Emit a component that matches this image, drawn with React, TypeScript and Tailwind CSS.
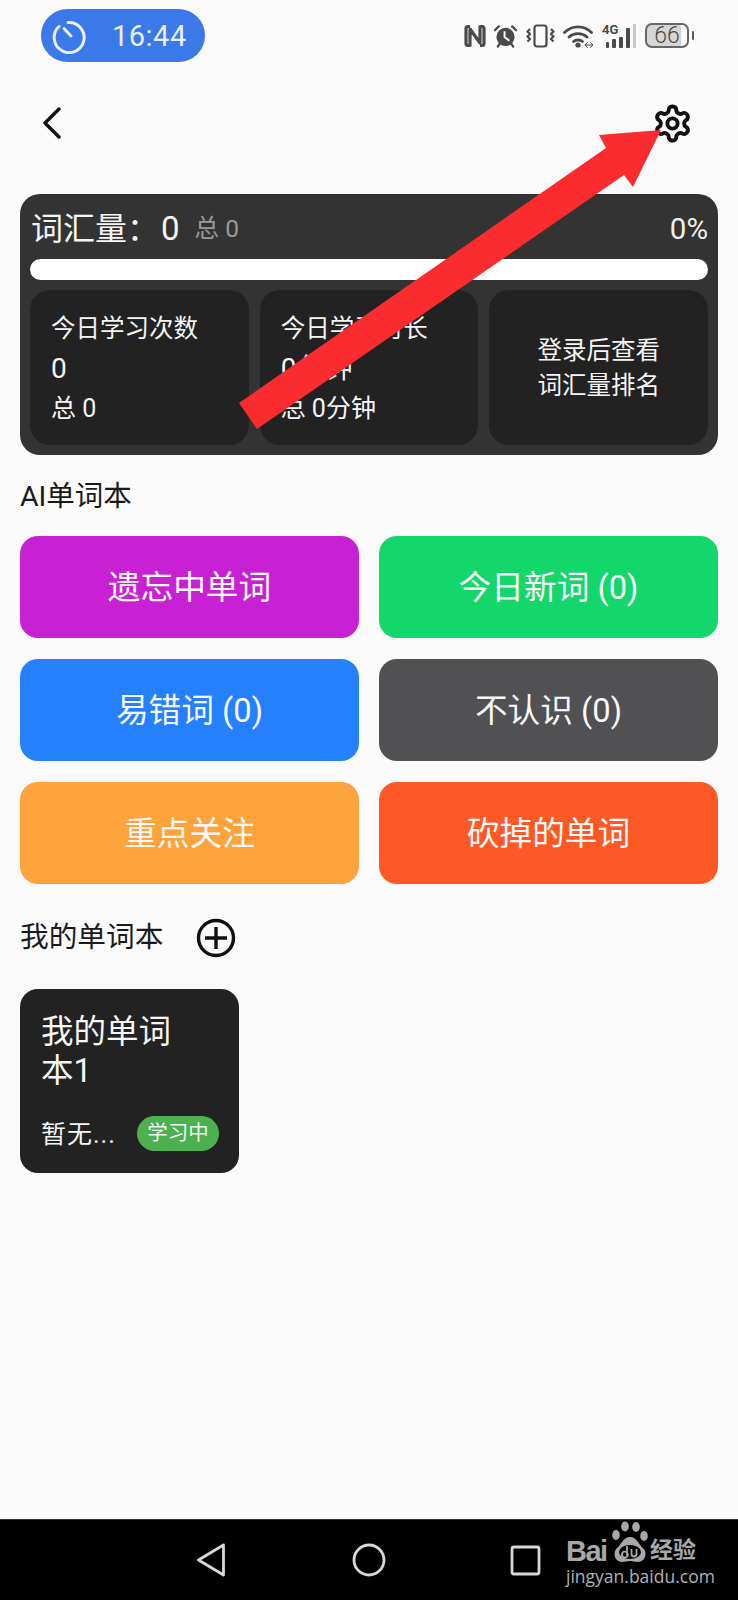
import React from "react";

const FF = { fontFamily: '"Roboto","Noto Sans CJK SC",sans-serif' };

function Timer() {
  return (
    <svg width="36" height="36" viewBox="0 0 36 36" fill="none" stroke="#e8f0fd" strokeWidth="3" strokeLinecap="round">
      <path d="M16 4.600 A15 15 0 1 1 7 8.500" />
      <path d="M12 10.500 L19 18" />
    </svg>
  );
}

function StatusIcons() {
  const c = "#4a4a4a";
  return (
    <div className="flex items-center ml-auto mr-[44px] mt-[14px]">
      {/* NFC */}
      <svg width="22" height="24" viewBox="0 0 22 24" fill="none" stroke={c} className="mr-[8px]">
        <path d="M6 2.500H4Q2 2.500 2 4.500V19.500Q2 21.500 4 21.500H6V5L16 19V2.500H18Q20 2.500 20 4.500V19.500Q20 21.500 18 21.500H16" strokeWidth="3.200" strokeLinejoin="round" />
      </svg>
      {/* alarm */}
      <svg width="23" height="24" viewBox="0 0 24 24" className="mr-[9px]">
        <circle cx="12" cy="13" r="9.500" fill={c} />
        <path d="M11 7V13L16 17" stroke="#fafafa" strokeWidth="2" fill="none" />
        <path d="M1 6L5 2M23 6L19 2M4 23L6 20M20 23L18 20" stroke={c} strokeWidth="2.400" fill="none" strokeLinecap="round" />
      </svg>
      {/* vibrate */}
      <svg width="29" height="24" viewBox="0 0 29 24" fill="none" stroke={c} strokeWidth="2.200" className="mr-[8px]">
        <rect x="8.500" y="1.500" width="12" height="21" rx="2.500" />
        <path d="M4 5L1.500 7.500L4 10L1.500 12.500L4 15L1.500 17.500M25 5L27.500 7.500L25 10L27.500 12.500L25 15L27.500 17.500" strokeLinejoin="round" />
      </svg>
      {/* wifi */}
      <svg width="30" height="24" viewBox="0 0 30 24" fill="none" stroke={c} strokeWidth="2.800" strokeLinecap="round" className="mr-[9px]">
        <path d="M1.500 8.500C9 1 21 1 28.500 8.500" />
        <path d="M6 13C11 8.500 19 8.500 24 13" />
        <path d="M10.500 17.500C13 15.500 17 15.500 19.500 17.500" />
        <circle cx="15" cy="21" r="2.600" fill={c} stroke="none" />
        <path d="M22 21H30M24.500 18.500L22 21L24.500 23.500M27.500 18.500L30 21L27.500 23.500" strokeWidth="1" />
      </svg>
      {/* signal */}
      <div className="relative w-[34px] h-[24px] mr-[9px] flex items-end gap-[3px] pl-[4px]">
        <span className="absolute left-0 top-[-1px] text-[13px] leading-[13px] font-bold text-[#4a4a4a]">4G</span>
        <div className="w-[3px] h-[6px] bg-[#4a4a4a] rounded-[1px]" />
        <div className="w-[4px] h-[9px] bg-[#4a4a4a] rounded-[1px]" />
        <div className="w-[4px] h-[11px] bg-[#4a4a4a] rounded-[1px]" />
        <div className="w-[4px] h-[20px] bg-[#4a4a4a] rounded-[1px]" />
        <div className="w-[3px] h-[24px] bg-[#c8c8c8] rounded-[1px]" />
      </div>
      {/* battery */}
      <div className="flex items-center">
        <div className="w-[44px] h-[25px] rounded-[7px] border-2 border-[#666666] bg-[linear-gradient(90deg,#d6d6d6_86%,#fafafa_86%)] flex items-center justify-center text-[23px] leading-none font-light text-[#4a4a4a]">
          66
        </div>
        <div className="w-[2px] h-[9px] ml-[3px] rounded-[1px] bg-[#5a5a5a]" />
      </div>
    </div>
  );
}

function StatCard({ title, v, total }: { title: string; v: string; total: string }) {
  return (
    <div className="bg-[#222222] rounded-[20px] pl-[21px] pt-[20px] text-[#f5f5f5] overflow-hidden">
      <div className="text-[24.500px] leading-[33px] mt-[2px] whitespace-nowrap">{title}</div>
      <div className="text-[28px] leading-[33px] mt-[7px]">{v}</div>
      <div className="text-[25px] leading-[33px] mt-[7px]">{total}</div>
    </div>
  );
}

function Btn({ label, bg }: { label: string; bg: string }) {
  return (
    <div className={`h-[102px] rounded-[18px] flex items-center justify-center pt-[3px] text-[32.700px] text-[#f8f8f8] ${bg}`}>
      {label}
    </div>
  );
}

function Paw() {
  return (
    <svg width="40" height="42" viewBox="0 0 40 42" fill="#a8a8a8">
      <ellipse cx="15" cy="5.500" rx="3.800" ry="5" />
      <ellipse cx="26" cy="6" rx="3.800" ry="5" />
      <ellipse cx="6" cy="14" rx="3.800" ry="5" />
      <ellipse cx="34" cy="15" rx="3.800" ry="5" />
      <path d="M20 16C27 16 28 23 33 27C38 32 35 41 28 41C25 41 23 40 20 40C17 40 15 41 12 41C5 41 2 32 7 27C12 23 13 16 20 16Z" />
      <ellipse cx="20" cy="31" rx="11" ry="7" fill="#000" />
      <path d="M17 25V35M17 31.500A3 3 0 1 1 16.900 31.400M21.500 28V33A2.500 2.500 0 0 0 26.500 33V28" fill="none" stroke="#a8a8a8" strokeWidth="1.800" />
    </svg>
  );
}

export default function App() {
  return (
    <div style={FF} className="relative w-[738px] h-[1600px] bg-[#fafafa] flex flex-col overflow-hidden">
      {/* status bar */}
      <div className="flex items-start h-[82px] shrink-0 pt-[9px] pl-[41px]">
        <div className="w-[164px] h-[53px] rounded-full bg-[#3b78e8] flex items-center pl-[11px] text-[#e8f0fd]">
          <Timer />
          <span className="ml-[24px] text-[29px] leading-none mt-[2px] tracking-[0.5px]">16:44</span>
        </div>
        <StatusIcons />
      </div>

      {/* header */}
      <div className="flex items-center justify-between h-[82px] shrink-0 pl-[42px] pr-[45px]">
        <svg width="20" height="32" viewBox="0 0 20 32" fill="none" stroke="#111" strokeWidth="3.400" strokeLinecap="round" strokeLinejoin="round">
          <path d="M17 2L3 16L17 30" />
        </svg>
        <svg width="41" height="41" viewBox="0 0 24 24" fill="none" stroke="#111" strokeWidth="2.300" strokeLinecap="round" strokeLinejoin="round">
          <path d="M12.220 2h-.44a2 2 0 0 0-2 2v.18a2 2 0 0 1-1 1.730l-.43.250a2 2 0 0 1-2 0l-.15-.08a2 2 0 0 0-2.730.73l-.22.380a2 2 0 0 0 .73 2.730l.150.100a2 2 0 0 1 1 1.720v.510a2 2 0 0 1-1 1.740l-.15.090a2 2 0 0 0-.73 2.730l.22.380a2 2 0 0 0 2.730.73l.15-.08a2 2 0 0 1 2 0l.43.250a2 2 0 0 1 1 1.730V20a2 2 0 0 0 2 2h.44a2 2 0 0 0 2-2v-.18a2 2 0 0 1 1-1.730l.43-.25a2 2 0 0 1 2 0l.15.080a2 2 0 0 0 2.730-.73l.22-.39a2 2 0 0 0-.73-2.730l-.15-.08a2 2 0 0 1-1-1.740v-.5a2 2 0 0 1 1-1.740l.15-.09a2 2 0 0 0 .73-2.730l-.22-.38a2 2 0 0 0-2.730-.73l-.15.080a2 2 0 0 1-2 0l-.43-.25a2 2 0 0 1-1-1.730V4a2 2 0 0 0-2-2z" />
          <circle cx="12" cy="12" r="3" />
        </svg>
      </div>

      {/* main */}
      <div className="flex-1 px-[20px] pt-[30px]">
        <div className="bg-[#333333] rounded-[20px] h-[261px] px-[10px] flex flex-col">
          <div className="h-[65px] flex items-center text-[#f5f5f5] pt-[5px]">
            <span className="text-[32px] pl-[1px]">词汇量：</span>
            <span className="text-[33px] ml-[2px]">0</span>
            <span className="text-[24.500px] ml-[15px] text-[#9a9a9a]">总 0</span>
            <span className="text-[29.500px] ml-auto text-[#f0f0f0]">0%</span>
          </div>
          <div className="h-[21px] bg-white rounded-full" />
          <div className="grid grid-cols-3 gap-[11px] mt-[10px] h-[155px]">
            <StatCard title="今日学习次数" v="0" total="总 0" />
            <StatCard title="今日学习时长" v="0分钟" total="总 0分钟" />
            <div className="bg-[#222222] rounded-[20px] flex items-center justify-center text-center text-[24.500px] leading-[35px] text-[#f5f5f5]">
              <div>
                登录后查看
                <br />
                词汇量排名
              </div>
            </div>
          </div>
        </div>

        <div className="text-[28.500px] leading-[36px] text-[#1a1a1a] mt-[24px]">AI单词本</div>

        <div className="grid grid-cols-2 gap-x-[20px] gap-y-[21px] mt-[21px]">
          <Btn label="遗忘中单词" bg="bg-[#c821d4]" />
          <Btn label="今日新词 (0)" bg="bg-[#14d76b]" />
          <Btn label="易错词 (0)" bg="bg-[#2580fd]" />
          <Btn label="不认识 (0)" bg="bg-[#515053]" />
          <Btn label="重点关注" bg="bg-[#fea33c]" />
          <Btn label="砍掉的单词" bg="bg-[#fd5825]" />
        </div>

        <div className="flex items-center mt-[32px] h-[44px]">
          <span className="text-[28.700px] text-[#1a1a1a]">我的单词本</span>
          <svg width="40" height="40" viewBox="0 0 40 40" fill="none" stroke="#111" strokeWidth="3.400" className="ml-[33px]">
            <circle cx="20" cy="20" r="17.500" />
            <path d="M20 9V31M9 20H31" />
          </svg>
        </div>

        <div className="w-[219px] h-[184px] bg-[#222222] rounded-[18px] mt-[29px] pl-[21px] pr-[20px] pt-[24px] text-[#f5f5f5] flex flex-col">
          <div className="text-[32.500px] leading-[39px] w-[136px] break-all">我的单词本1</div>
          <div className="flex items-center justify-between mt-[23px]">
            <span className="text-[25px] tracking-[1px] mt-[2px]">暂无...</span>
            <span className="w-[82px] h-[35px] rounded-full bg-[#4caf50] flex items-center justify-center text-[20.500px] text-[#eef8ee]">
              学习中
            </span>
          </div>
        </div>
      </div>

      {/* nav */}
      <div className="relative h-[81px] shrink-0 bg-black flex items-center pl-[196px] border-t border-[#333]">
        <svg width="30" height="34" viewBox="0 0 30 34" fill="none" stroke="#d8d8d8" strokeWidth="2.800" strokeLinejoin="round">
          <path d="M27.500 2L2.500 17L27.500 32Z" />
        </svg>
        <svg width="34" height="34" viewBox="0 0 34 34" fill="none" stroke="#d8d8d8" strokeWidth="2.800" className="ml-[126px]">
          <circle cx="17" cy="17" r="15" />
        </svg>
        <svg width="31" height="31" viewBox="0 0 31 31" fill="none" stroke="#d8d8d8" strokeWidth="2.800" className="ml-[124px]">
          <rect x="2" y="2" width="27" height="27" rx="2" />
        </svg>
        {/* watermark */}
        <div className="absolute left-[566px] top-0 h-[72px] w-[132px]">
          <div className="absolute left-0 top-[17px] text-[29px] leading-[29px] font-bold tracking-[-1.500px] text-[#a8a8a8]" style={{ fontFamily: '"Liberation Sans",sans-serif' }}>Bai</div>
          <div className="absolute left-[44px] top-[1px]"><Paw /></div>
          <div className="absolute left-[84px] top-[17px] text-[23px] leading-[28px] font-bold text-[#a8a8a8] whitespace-nowrap">经验</div>
          <div className="absolute left-0 top-[46px] text-[17.500px] leading-[20px] text-[#b0b0b0] whitespace-nowrap" style={{ fontFamily: '"Open Sans",sans-serif' }}>jingyan.baidu.com</div>
        </div>
      </div>

      {/* annotation arrow */}
      <svg className="absolute left-0 top-0 pointer-events-none" width="738" height="1600" viewBox="0 0 738 1600">
        <polygon points="239,403 606,148 599,135 661,130 633,187 624,175 257,429" fill="#fb2c30" />
      </svg>
    </div>
  );
}
